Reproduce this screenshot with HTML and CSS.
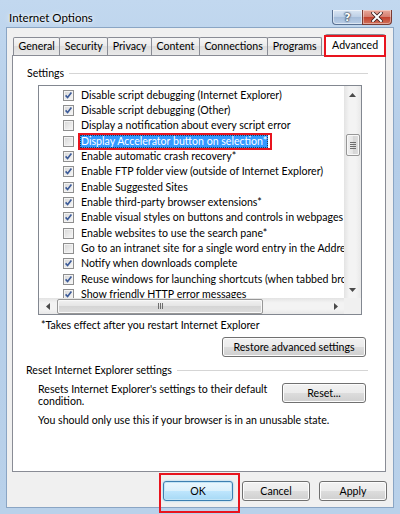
FILE: index.html
```html
<!DOCTYPE html>
<html lang="en">
<head>
    <meta charset="UTF-8">
    <meta name="viewport" content="width=device-width, initial-scale=1.0">
    <title>Internet Options</title>
    <link rel="stylesheet" href="styles.css">
</head>
<body>

<div class="window">
    <div class="titlebar">
        <span class="title">Internet Options</span>
        <div class="caption-buttons">
            <span class="cap help">?</span>
            <span class="cap close">
                <svg width="12" height="10" viewBox="0 0 12 10">
                    <path d="M2 1 L10 9 M10 1 L2 9" stroke="#3a2020" stroke-width="3.6" stroke-linecap="square"/>
                    <path d="M2 1 L10 9 M10 1 L2 9" stroke="#ffffff" stroke-width="2" stroke-linecap="square"/>
                </svg>
            </span>
        </div>
    </div>

    <div class="client">
        <div class="tabs">
            <span class="tab">General</span>
            <span class="tab">Security</span>
            <span class="tab">Privacy</span>
            <span class="tab">Content</span>
            <span class="tab">Connections</span>
            <span class="tab">Programs</span>
            <span class="tab active marked">Advanced</span>
        </div>

        <div class="panel">
            <div class="group-head">
                <span>Settings</span>
                <i class="rule"></i>
            </div>

            <div class="listbox">
                <div class="rows">
                    <div class="row"><span class="check on"></span><span class="label">Disable script debugging (Internet Explorer)</span></div>
                    <div class="row"><span class="check on"></span><span class="label">Disable script debugging (Other)</span></div>
                    <div class="row"><span class="check"></span><span class="label">Display a notification about every script error</span></div>
                    <div class="row"><span class="check"></span><span class="label selected marked">Display Accelerator button on selection*</span></div>
                    <div class="row"><span class="check on"></span><span class="label">Enable automatic crash recovery*</span></div>
                    <div class="row"><span class="check on"></span><span class="label">Enable FTP folder view (outside of Internet Explorer)</span></div>
                    <div class="row"><span class="check on"></span><span class="label">Enable Suggested Sites</span></div>
                    <div class="row"><span class="check on"></span><span class="label">Enable third-party browser extensions*</span></div>
                    <div class="row"><span class="check on"></span><span class="label">Enable visual styles on buttons and controls in webpages</span></div>
                    <div class="row"><span class="check"></span><span class="label">Enable websites to use the search pane*</span></div>
                    <div class="row"><span class="check"></span><span class="label">Go to an intranet site for a single word entry in the Address bar</span></div>
                    <div class="row"><span class="check on"></span><span class="label">Notify when downloads complete</span></div>
                    <div class="row"><span class="check on"></span><span class="label">Reuse windows for launching shortcuts (when tabbed browsing is off)</span></div>
                    <div class="row"><span class="check on"></span><span class="label">Show friendly HTTP error messages</span></div>
                </div>

                <div class="vscroll">
                    <span class="arrow"><svg width="7" height="4" viewBox="0 0 7 4"><polygon points="3.5,0 7,4 0,4" fill="#4a4a4a"/></svg></span>
                    <div class="track">
                        <span class="thumb v"><i></i><i></i><i></i><i></i></span>
                    </div>
                    <span class="arrow"><svg width="7" height="4" viewBox="0 0 7 4"><polygon points="0,0 7,0 3.5,4" fill="#4a4a4a"/></svg></span>
                </div>

                <div class="hscroll">
                    <span class="arrow"><svg width="4" height="7" viewBox="0 0 4 7"><polygon points="0,3.5 4,0 4,7" fill="#4a4a4a"/></svg></span>
                    <div class="track">
                        <span class="thumb h"><i></i><i></i><i></i></span>
                    </div>
                    <span class="arrow"><svg width="4" height="7" viewBox="0 0 4 7"><polygon points="0,0 4,3.5 0,7" fill="#4a4a4a"/></svg></span>
                </div>

                <div class="corner"></div>
            </div>

            <p class="note">*Takes effect after you restart Internet Explorer</p>

            <div class="btn-row">
                <button class="btn restore">Restore advanced settings</button>
            </div>

            <div class="group-head reset-head">
                <span>Reset Internet Explorer settings</span>
                <i class="rule"></i>
            </div>

            <div class="reset-box">
                <p>Resets Internet Explorer's settings to their default<br>condition.</p>
                <button class="btn reset">Reset...</button>
            </div>

            <p class="warn">You should only use this if your browser is in an unusable state.</p>
        </div>

        <div class="footer">
            <button class="btn default marked">OK</button>
            <button class="btn">Cancel</button>
            <button class="btn">Apply</button>
        </div>
    </div>
</div>

</body>
</html>
```

FILE: styles.css
```css
body {
    margin: 0;
    padding: 0;
    font-family: Lato, "Open Sans", sans-serif;
    font-size: 10.6px;
    color: #000;
    background-color: #b9d1ea;
}
.window {
    width: 400px;
    height: 514px;
    background: linear-gradient(#c2d8ef, #b4cde8 30%, #b9d1ea);
    overflow: hidden;
}
.titlebar {
    height: 28px;
    display: flex;
    justify-content: space-between;
    align-items: flex-start;
}
.title {
    margin: 11px 0 0 9px;
    font-size: 11.5px;
    line-height: 13px;
    color: #000;
    text-shadow: 0 0 6px #ffffff, 0 0 3px #ffffff;
}
.caption-buttons {
    display: flex;
    margin: 10px 8px 0 0;
}
.cap {
    height: 15px;
    display: flex;
    align-items: center;
    justify-content: center;
    box-sizing: border-box;
    border: 1px solid #5a7192;
    border-top: none;
}
.help {
    width: 30px;
    border-radius: 0 0 0 4px;
    border-right: none;
    background: linear-gradient(#dbe6f3, #bccfe6 50%, #a4bcd9 50%, #b9cde6);
    color: #fff;
    font-family: "DejaVu Sans", sans-serif;
    font-weight: bold;
    font-size: 11px;
    text-shadow: 0 0 1px #2c3a50, 0 0 2px #2c3a50, 0 0 2px #2c3a50;
    box-shadow: inset 0 0 0 1px rgba(255, 255, 255, 0.5);
}
.close {
    width: 30px;
    border-radius: 0 0 4px 0;
    border-color: #7a3a32;
    background: linear-gradient(#e9a99b, #d47d6e 50%, #c2402c 50%, #d0705a);
    box-shadow: inset 0 0 0 1px rgba(255, 255, 255, 0.4);
}
.client {
    height: 479px;
    margin: 0 7px;
    background-color: #f0f0f0;
    display: flex;
    flex-direction: column;
    box-shadow: 0 0 0 1px #8aa5c4;
}
.tabs {
    display: flex;
    align-items: flex-end;
    height: 21px;
    margin: 6px 0 0 6px;
    position: relative;
    z-index: 1;
}
.tab {
    height: 18px;
    line-height: 17px;
    padding: 0 4.5px;
    margin-left: -1px;
    box-sizing: border-box;
    border: 1px solid #898c95;
    border-bottom: none;
    border-radius: 2px 2px 0 0;
    background: linear-gradient(#f6f6f6, #eaeaea 50%, #dedede 50%, #e9e9e9);
    white-space: nowrap;
}
.tab:first-child {
    margin-left: 0;
}
.tab.active {
    height: 22px;
    line-height: 20px;
    margin: 0 0 -1px 3px;
    padding: 0 6px;
    background: #ffffff;
}
.marked {
    position: relative;
}
.marked::after {
    content: "";
    position: absolute;
    border: 2px solid #e8141e;
    pointer-events: none;
}
.tab.marked::after {
    top: 0;
    left: -2px;
    right: -2px;
    bottom: -1px;
}
.panel {
    height: 417px;
    margin: 0 7px 0 5px;
    box-sizing: border-box;
    background-color: #ffffff;
    border: 1px solid #898c95;
}
.group-head {
    display: flex;
    align-items: center;
    height: 12px;
    margin: 11px 17px 0 14px;
    white-space: nowrap;
}
.rule {
    flex: 1;
    height: 1px;
    margin-left: 5px;
    background-color: #d5d5d5;
}
.listbox {
    height: 230px;
    margin: 6px 23px 0 25px;
    box-sizing: border-box;
    border: 1px solid #828790;
    display: grid;
    grid-template-columns: 1fr 17px;
    grid-template-rows: 1fr 16px;
}
.rows {
    overflow: hidden;
    padding-top: 1.6px;
    min-width: 0;
}
.row {
    height: 15.33px;
    display: flex;
    align-items: center;
    padding-left: 24px;
    white-space: nowrap;
}
.check {
    flex: none;
    width: 11px;
    height: 11px;
    margin-right: 6px;
    box-sizing: border-box;
    border: 1px solid #8f8f8f;
    background: linear-gradient(135deg, #d6d6d6, #f8f8f8);
    box-shadow: inset 0 0 0 1px #f3f3f3;
}
.check.on {
    background:
        url("data:image/svg+xml;utf8,<svg xmlns='http://www.w3.org/2000/svg' width='9' height='9' viewBox='0 0 9 9'><path d='M1.6 4.4 L3.6 6.6 L7.4 1.6' fill='none' stroke='%233b5a98' stroke-width='1.6'/></svg>") center / 9px 9px no-repeat,
        linear-gradient(135deg, #d6d6d6, #f8f8f8);
}
.label {
    line-height: 13px;
    padding: 0 1px;
}
.label.selected {
    background-color: #3399ff;
    color: #ffffff;
    outline: 1px dotted #1b3d60;
    outline-offset: -1px;
}
.label.marked::after {
    top: -2px;
    left: -2px;
    right: -4px;
    bottom: -2px;
}
.vscroll {
    grid-row: 1;
    grid-column: 2;
    display: flex;
    flex-direction: column;
    background: linear-gradient(90deg, #e3e3e3, #f3f3f3 30%, #f3f3f3 70%, #e8e8e8);
}
.hscroll {
    grid-row: 2;
    grid-column: 1;
    display: flex;
    background: linear-gradient(#e3e3e3, #f3f3f3 30%, #f3f3f3 70%, #e8e8e8);
}
.corner {
    grid-row: 2;
    grid-column: 2;
    background-color: #f0f0f0;
}
.arrow {
    flex: none;
    width: 17px;
    height: 17px;
    display: flex;
    align-items: center;
    justify-content: center;
}
.hscroll .arrow {
    width: 17px;
    height: 16px;
}
.track {
    flex: 1;
    display: flex;
}
.vscroll .track {
    flex-direction: column;
    align-items: center;
}
.hscroll .track {
    align-items: center;
}
.thumb {
    display: flex;
    align-items: center;
    justify-content: center;
    box-sizing: border-box;
    border: 1px solid #979797;
    border-radius: 2px;
    background: linear-gradient(90deg, #f1f1f1, #e4e4e4 50%, #d5d5d5 50%, #dedede);
    box-shadow: inset 0 0 0 1px #f8f8f8;
}
.thumb.v {
    width: 14px;
    height: 22px;
    margin-top: 31px;
    flex-direction: column;
    gap: 1px;
}
.thumb.v i {
    width: 6px;
    height: 1px;
    background-color: #6d6d6d;
}
.thumb.h {
    width: 206px;
    height: 15px;
    margin-left: 1px;
    gap: 1px;
    background: linear-gradient(#f1f1f1, #e4e4e4 50%, #d5d5d5 50%, #dedede);
}
.thumb.h i {
    width: 1px;
    height: 6px;
    background-color: #6d6d6d;
}
.note {
    margin: 4px 0 0 28px;
    line-height: 12px;
}
.btn-row {
    display: flex;
    justify-content: flex-end;
    margin: 6px 19px 0 0;
}
.btn {
    font-family: Lato, "Open Sans", sans-serif;
    font-size: 10.6px;
    color: #000;
    height: 20px;
    padding: 0;
    box-sizing: border-box;
    border: 1px solid #707070;
    border-radius: 3px;
    background: linear-gradient(#f2f2f2, #ebebeb 50%, #dddddd 50%, #cfcfcf);
    box-shadow: inset 0 0 0 1px #fcfcfc;
}
.restore {
    width: 144px;
}
.reset-head {
    margin: 7px 17px 0 13px;
}
.reset-box {
    display: flex;
    justify-content: space-between;
    align-items: flex-start;
    margin: 7px 19px 0 25px;
}
.reset-box p {
    margin: 0;
    line-height: 12px;
}
.reset {
    width: 84px;
}
.warn {
    margin: 7px 0 0 25px;
    line-height: 12px;
}
.footer {
    display: flex;
    justify-content: flex-end;
    gap: 9px;
    margin: 9px 6px 0 0;
}
.footer .btn {
    width: 68px;
}
.footer .btn.default {
    width: 70px;
    border-color: #3c7fb1;
    background: linear-gradient(#eaf6fd, #d9f0fc 50%, #bee6fd 50%, #a7d9f5);
    box-shadow: inset 0 0 0 1px #c2e4f6, 0 0 2px #7fc6ef;
}
.footer .btn.marked::after {
    top: -9px;
    left: -5px;
    right: -8px;
    bottom: -13px;
}
```
